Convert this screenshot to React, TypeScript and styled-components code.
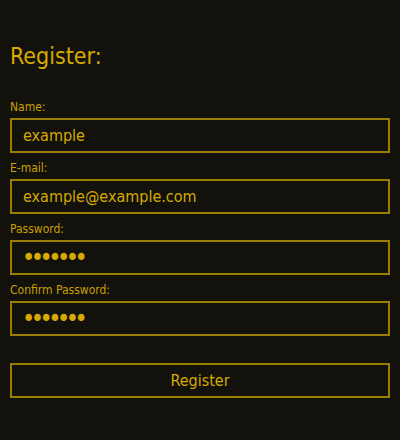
import React from "react";
import styled, { createGlobalStyle } from "styled-components";

const Global = createGlobalStyle`
  html, body {
    margin: 0;
    padding: 0;
    background: #13110c;
  }
  body {
    font-family: "DejaVu Sans Condensed", "DejaVu Sans", sans-serif;
    font-stretch: condensed;
  }
`;

const Page = styled.div`
  width: 400px;
  height: 440px;
  box-sizing: border-box;
  padding: 42px 10px 0;
  background: #13110c;
  color: #d6aa00;
`;

const Title = styled.h1`
  margin: 0 0 29px;
  font-size: 23px;
  line-height: 28px;
  font-weight: normal;
  color: #d6aa00;
`;

const Form = styled.form`
  display: flex;
  flex-direction: column;
  gap: 7px;
`;

const Field = styled.div`
  display: flex;
  flex-direction: column;
`;

const Label = styled.label`
  font-size: 12px;
  line-height: 16px;
  margin-bottom: 3px;
  color: #c9a000;
`;

const Input = styled.input<{ $pw?: boolean }>`
  box-sizing: border-box;
  width: 100%;
  height: 35px;
  margin: 0;
  padding: 0 ${(p) => (p.$pw ? "10px" : "11px")};
  background: transparent;
  border: 2px solid #9a7e00;
  border-radius: 0;
  outline: none;
  color: #d6aa00;
  font-family: inherit;
  font-stretch: condensed;
  font-size: ${(p) => (p.$pw ? "25px" : "16px")};
  letter-spacing: ${(p) => (p.$pw ? "-4.5px" : "0")};
`;

const Button = styled.button`
  box-sizing: border-box;
  width: 100%;
  height: 35px;
  margin-top: 20px;
  background: transparent;
  border: 2px solid #9a7e00;
  border-radius: 0;
  color: #d6aa00;
  font-family: inherit;
  font-stretch: condensed;
  font-size: 16px;
  cursor: pointer;
`;

export default function App() {
  return (
    <Page>
      <Global />
      <Title>Register:</Title>
      <Form onSubmit={(e) => e.preventDefault()}>
        <Field>
          <Label>Name:</Label>
          <Input defaultValue="example" />
        </Field>
        <Field>
          <Label>E-mail:</Label>
          <Input defaultValue="example@example.com" />
        </Field>
        <Field>
          <Label>Password:</Label>
          <Input $pw type="password" defaultValue="1234567" />
        </Field>
        <Field>
          <Label>Confirm Password:</Label>
          <Input $pw type="password" defaultValue="1234567" />
        </Field>
        <Button type="submit">Register</Button>
      </Form>
    </Page>
  );
}
